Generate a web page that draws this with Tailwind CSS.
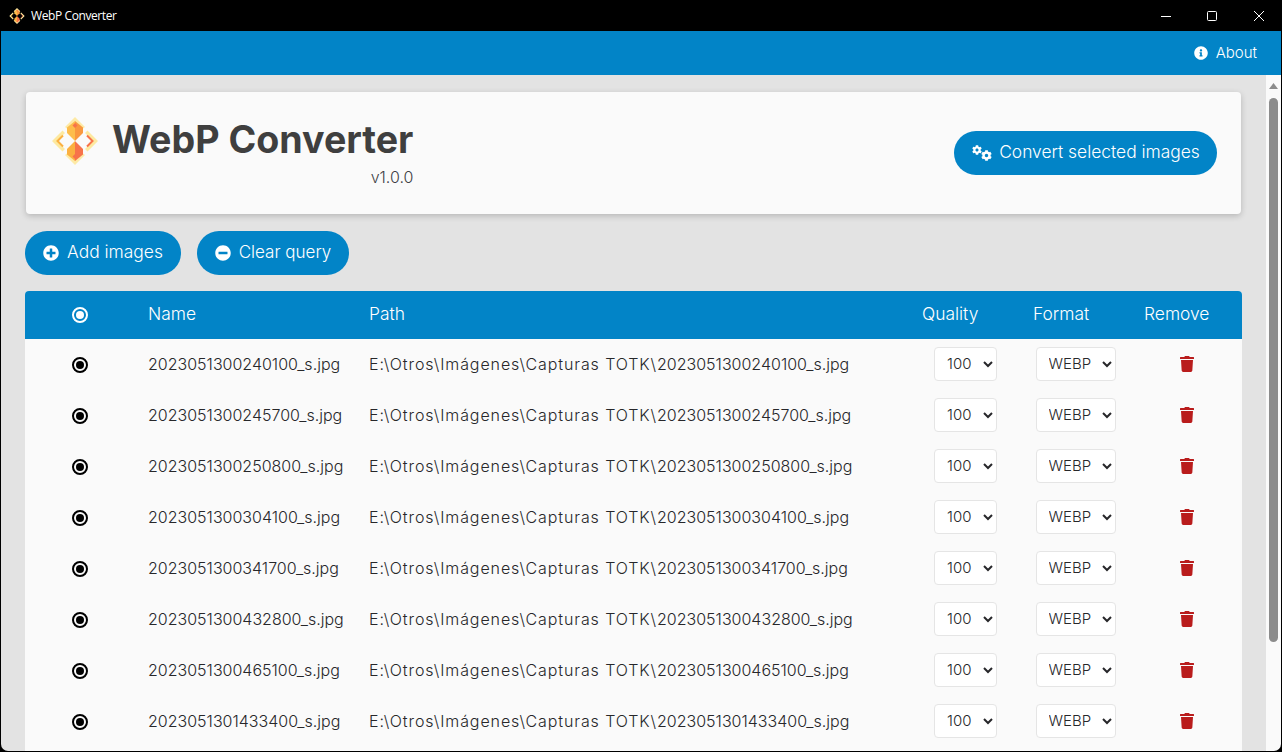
<!DOCTYPE html>
<html lang="en">
<head>
  <meta charset="UTF-8">
  <title>WebP Converter</title>
  <script src="https://cdn.jsdelivr.net/npm/@tailwindcss/browser@4"></script>
</head>
<body class="bg-black h-screen overflow-hidden font-['Inter',sans-serif] font-light text-white">
  <svg width="0" height="0" class="absolute">
    <defs>
      <symbol id="logo" viewBox="0 0 46 48">
        <path fill="#fdeaa6" d="M23 0 33 10 23 18 13 10Z"/>
        <path fill="#fdeaa6" d="M23 48 33 38 23 30 13 38Z"/>
        <path fill="#fde9a0" d="M10.500 13.500 0 24 10.500 34.500 13 32 5 24 13 16Z"/>
        <path fill="#fde9a0" d="M35.500 13.500 46 24 35.500 34.500 33 32 41 24 33 16Z"/>
        <path fill="none" stroke="#fbb040" stroke-width="2" d="M11 18.500 5.500 24 11 29.500"/>
        <path fill="none" stroke="#f7734a" stroke-width="2" d="M35 18.500 40.500 24 35 29.500"/>
        <path fill="#fdbd4b" d="M15 10.500 23 4 23 24 15 16Z"/>
        <path fill="#f9983f" d="M31 10.500 23 4 23 24 31 16Z"/>
        <path fill="#fbb040" d="M15 37.500 23 44 23 24 15 32Z"/>
        <path fill="#f7734a" d="M31 37.500 23 44 23 24 31 32Z"/>
        <path fill="#f7734a" d="M23 6 25.500 8.500 23 11 20.500 8.500Z"/>
        <path fill="#f7734a" d="M23 37 25.500 39.500 23 42 20.500 39.500Z"/>
      </symbol>
      <symbol id="cog" viewBox="0 0 512 512">
        <path fill="currentColor" d="M487.4 315.7l-42.6-24.6c4.3-23.2 4.3-47 0-70.2l42.6-24.6c4.9-2.8 7.1-8.6 5.5-14-11.1-35.6-30-67.8-54.7-94.6-3.8-4.1-10-5.1-14.8-2.3L380.8 110c-17.9-15.4-38.5-27.3-60.8-35.1V25.8c0-5.6-3.9-10.5-9.4-11.7-36.7-8.2-74.3-7.8-109.2 0-5.5 1.2-9.4 6.1-9.4 11.7V75c-22.2 7.9-42.8 19.8-60.8 35.1L88.7 85.5c-4.9-2.8-11-1.9-14.8 2.3-24.7 26.7-43.6 58.9-54.7 94.6-1.7 5.4.6 11.2 5.5 14L67.3 221c-4.3 23.2-4.3 47 0 70.2l-42.6 24.6c-4.9 2.8-7.1 8.6-5.5 14 11.1 35.6 30 67.8 54.7 94.6 3.8 4.1 10 5.1 14.8 2.3l42.6-24.6c17.9 15.4 38.5 27.3 60.8 35.1v49.2c0 5.6 3.9 10.5 9.4 11.7 36.7 8.2 74.3 7.8 109.2 0 5.5-1.2 9.4-6.1 9.4-11.7v-49.2c22.2-7.9 42.8-19.8 60.8-35.1l42.6 24.6c4.9 2.8 11 1.9 14.8-2.3 24.7-26.7 43.6-58.9 54.7-94.6 1.5-5.5-.7-11.3-5.6-14.1zM256 336c-44.1 0-80-35.9-80-80s35.9-80 80-80 80 35.9 80 80-35.9 80-80 80z"/>
      </symbol>
    </defs>
  </svg>

  <div class="h-full flex flex-col border border-t-0 border-black rounded-b-lg overflow-hidden">
    <!-- title bar -->
    <div class="h-[31px] shrink-0 bg-black flex items-center">
      <svg class="w-[16px] h-[16px] ml-[8px]"><use href="#logo"/></svg>
      <span class="ml-[6px] text-[12px] font-normal font-['Open_Sans',sans-serif] tracking-[-0.4px]">WebP Converter</span>
      <div class="ml-auto flex h-full items-center">
        <div class="w-[46px] flex justify-center"><svg width="10" height="10" viewBox="0 0 10 10"><path d="M0 5.500H10" stroke="#fff"/></svg></div>
        <div class="w-[46px] flex justify-center"><svg width="10" height="10" viewBox="0 0 10 10"><rect x=".5" y=".5" width="9" height="9" rx="1" fill="none" stroke="#fff"/></svg></div>
        <div class="w-[46px] flex justify-center pl-[1px]"><svg width="10" height="10" viewBox="0 0 10 10"><path d="M0 0 10 10M10 0 0 10" stroke="#fff"/></svg></div>
      </div>
    </div>

    <!-- nav -->
    <div class="h-[44px] shrink-0 bg-[#0284c7] flex items-center justify-end pr-[24px] text-[15px]">
      <svg class="w-[14px] h-[14px] mr-[8px]" viewBox="0 0 512 512"><path fill="currentColor" d="M256 8C119.043 8 8 119.083 8 256c0 136.997 111.043 248 248 248s248-111.003 248-248C504 119.083 392.957 8 256 8zm0 110c23.196 0 42 18.804 42 42s-18.804 42-42 42-42-18.804-42-42 18.804-42 42-42zm56 254c0 6.627-5.373 12-12 12h-88c-6.627 0-12-5.373-12-12v-24c0-6.627 5.373-12 12-12h12v-64h-12c-6.627 0-12-5.373-12-12v-24c0-6.627 5.373-12 12-12h64c6.627 0 12 5.373 12 12v100h12c6.627 0 12 5.373 12 12v24z"/></svg>
      About
    </div>

    <div class="flex-1 min-h-0 flex">
      <!-- content -->
      <div class="flex-1 min-w-0 bg-[#e3e3e3] pl-[24px] pr-[24px] pt-[17px] overflow-hidden">
        <div class="mx-px h-[122px] bg-[#fafafa] rounded-[4px] shadow-[0_2px_6px_rgba(0,0,0,0.2)] flex items-center justify-between pl-[26px] pr-[24px]">
          <div class="flex items-start pb-[2px]">
            <svg class="w-[46px] h-[48px] mt-[2px]"><use href="#logo"/></svg>
            <div class="ml-[14px] mt-[3px] flex flex-col items-end">
              <h1 class="text-[37.600px] leading-[44px] font-bold text-[#3f3f3f]">WebP Converter</h1>
              <span class="text-[16px] leading-[24px] text-[#3f3f46] mt-[3px]">v1.0.0</span>
            </div>
          </div>
          <button class="h-[44px] w-[263px] mb-[1px] rounded-full bg-[#0284c7] flex items-center justify-center text-[17.400px] whitespace-nowrap">
            <svg class="w-[20px] h-[16px] mr-[7px] ml-[1px]" viewBox="0 0 20 16"><use href="#cog" x="0" y="0" width="10" height="10"/><use href="#cog" x="9" y="5" width="11" height="11"/></svg>
            Convert selected images
          </button>
        </div>

        <div class="flex gap-[16px] mt-[17px]">
          <button class="h-[44px] w-[156px] pb-[2px] rounded-full bg-[#0284c7] flex items-center justify-center text-[17.400px]">
            <svg class="w-[16px] h-[16px] mr-[8px] mt-[2px]" viewBox="0 0 512 512"><path fill="currentColor" d="M256 8C119 8 8 119 8 256s111 248 248 248 248-111 248-248S393 8 256 8zm144 276c0 6.600-5.400 12-12 12h-92v92c0 6.600-5.400 12-12 12h-56c-6.600 0-12-5.400-12-12v-92h-92c-6.600 0-12-5.400-12-12v-56c0-6.600 5.400-12 12-12h92v-92c0-6.600 5.400-12 12-12h56c6.600 0 12 5.400 12 12v92h92c6.600 0 12 5.400 12 12v56z"/></svg>
            Add images
          </button>
          <button class="h-[44px] w-[152px] rounded-full bg-[#0284c7] flex items-center justify-center text-[17px]">
            <svg class="w-[16px] h-[16px] mr-[8px]" viewBox="0 0 512 512"><path fill="currentColor" d="M256 8C119 8 8 119 8 256s111 248 248 248 248-111 248-248S393 8 256 8zM124 296c-6.600 0-12-5.400-12-12v-56c0-6.600 5.400-12 12-12h264c6.600 0 12 5.400 12 12v56c0 6.600-5.400 12-12 12H124z"/></svg>
            Clear query
          </button>
        </div>

        <div class="mt-[16px] rounded-t-[4px] overflow-hidden bg-[#fafafa] pb-[40px]">
          <div class="h-[48px] pb-[2px] bg-[#0284c7] grid grid-cols-[110px_221px_553px_111px_111px_111px] items-center text-[17.400px]">
            <div class="flex justify-center pt-[2px]"><input type="radio" checked class="appearance-none size-4 rounded-full border-[2.500px] border-white bg-white bg-clip-content p-[2px]"></div>
            <div class="pl-[13px]">Name</div>
            <div class="pl-[13px]">Path</div>
            <div class="pl-[13px]">Quality</div>
            <div class="pl-[13px]">Format</div>
            <div class="pl-[13px]">Remove</div>
          </div>
          <div id="rows"></div>
        </div>
      </div>

      <!-- scrollbar -->
      <div class="w-[15px] shrink-0 bg-[#fafafa] flex flex-col items-center">
        <svg class="mt-[8px]" width="9" height="6" viewBox="0 0 9 6"><path d="M4.500 0 9 6H0Z" fill="#8c8c8c"/></svg>
        <div class="w-[9px] h-[544px] mt-[9px] rounded-full bg-[#8c8c8c]"></div>
      </div>
    </div>
  </div>

  <script>
    const files = [
      '2023051300240100_s.jpg',
      '2023051300245700_s.jpg',
      '2023051300250800_s.jpg',
      '2023051300304100_s.jpg',
      '2023051300341700_s.jpg',
      '2023051300432800_s.jpg',
      '2023051300465100_s.jpg',
      '2023051301433400_s.jpg'
    ];

    document.getElementById('rows').innerHTML = files.map(name => `
      <div class="h-[51px] pb-[2px] grid grid-cols-[110px_221px_553px_111px_111px_111px] items-center text-[16px] text-[#27272a]">
        <div class="flex justify-center pt-[2px]"><input type="radio" checked class="appearance-none size-4 rounded-full border-[2.500px] border-black bg-black bg-clip-content p-[2px]"></div>
        <div class="pl-[13px] whitespace-nowrap">${name}</div>
        <div class="pl-[13px] whitespace-nowrap"><span class="tracking-[0.9px]">E:\\Otros\\Imágenes\\Capturas TOTK\\</span>${name}</div>
        <div class="flex justify-center pl-[2px]"><select class="w-[63px] h-[34px] pl-[8px] text-[15px] bg-white border border-[#e5e5e5] rounded-[4px] font-light"><option>100</option></select></div>
        <div class="flex justify-center"><select class="w-[80px] h-[34px] pl-[8px] text-[15px] bg-white border border-[#e5e5e5] rounded-[4px] font-light"><option>WEBP</option></select></div>
        <div class="flex justify-center">
          <svg class="w-[14px] h-[16px] text-[#b91c1c]" viewBox="0 0 448 512"><path fill="currentColor" d="M432 32H312l-9.400-18.700A24 24 0 0 0 281.100 0H166.800a23.720 23.720 0 0 0-21.400 13.300L136 32H16A16 16 0 0 0 0 48v32a16 16 0 0 0 16 16h416a16 16 0 0 0 16-16V48a16 16 0 0 0-16-16zM53.200 467a48 48 0 0 0 47.900 45h245.800a48 48 0 0 0 47.900-45L416 128H32z"/></svg>
        </div>
      </div>`).join('');
  </script>
</body>
</html>
